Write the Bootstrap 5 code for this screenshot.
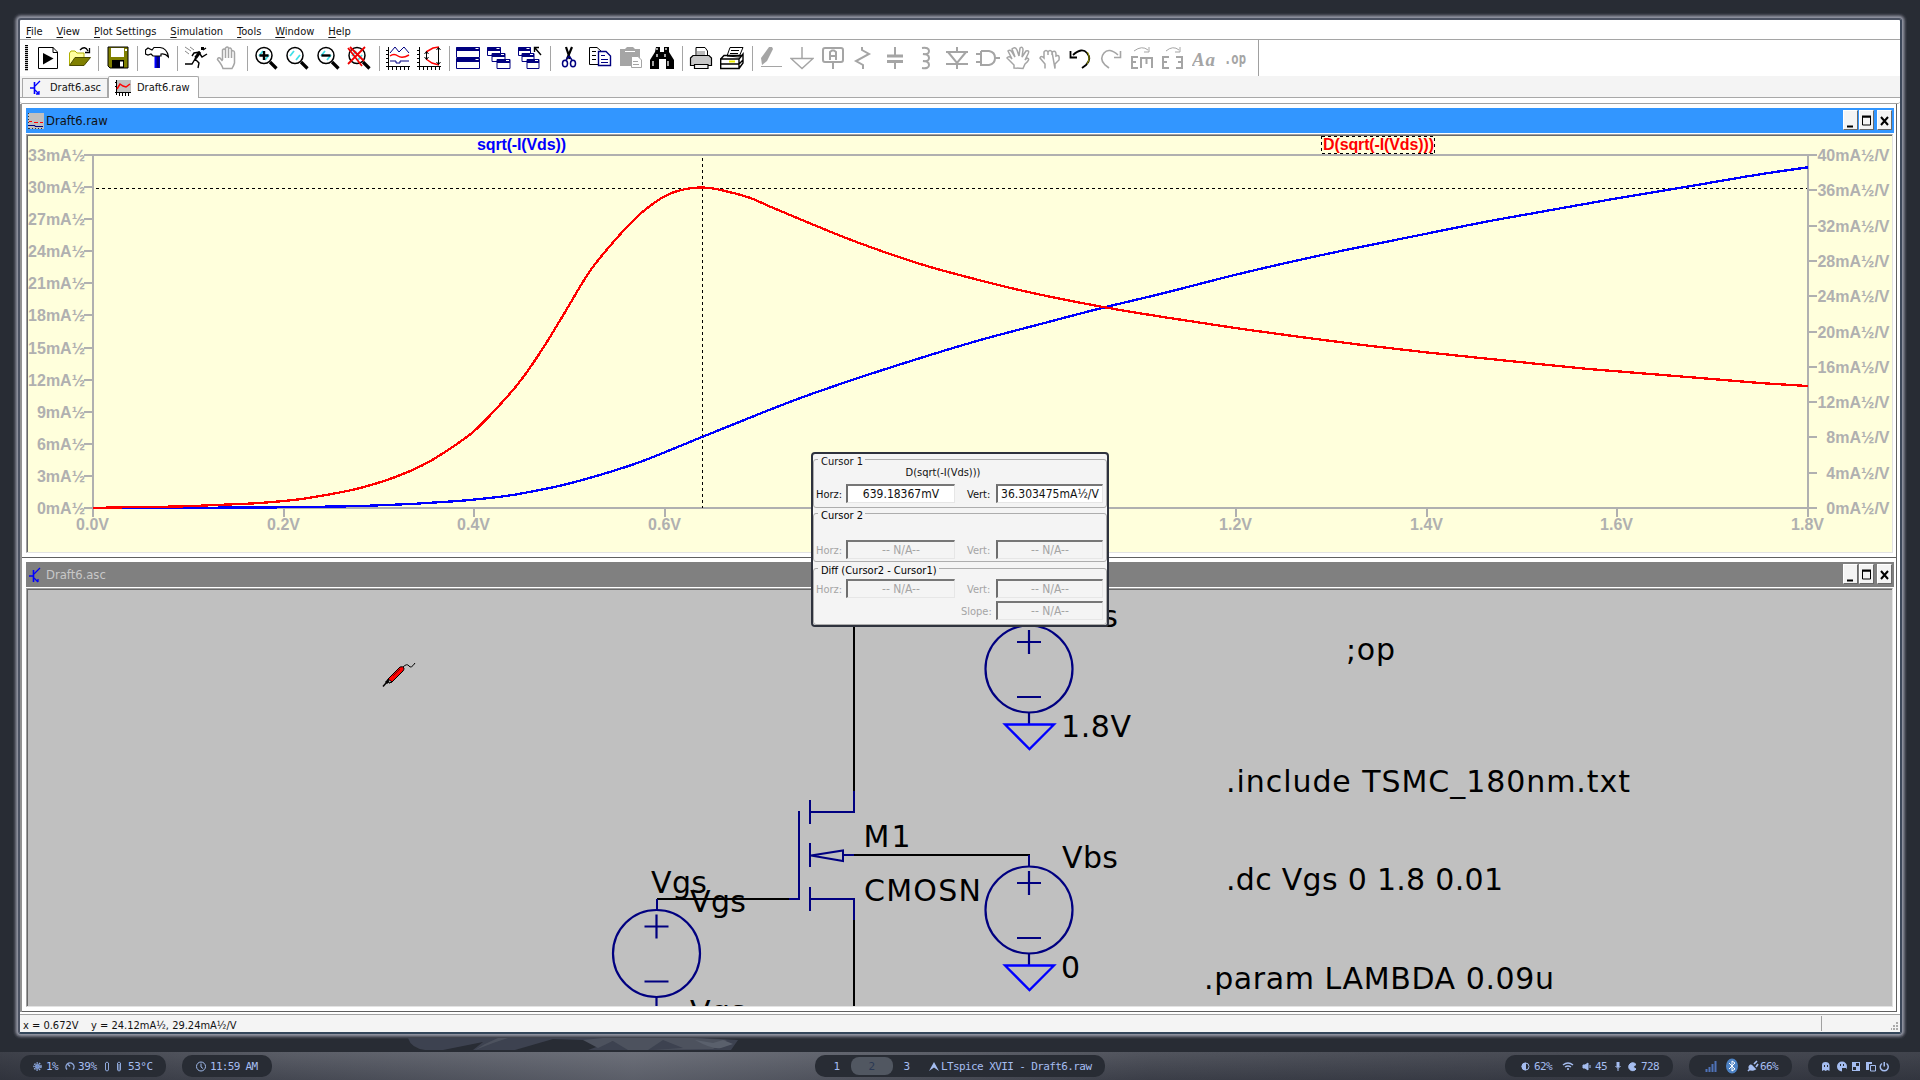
<!DOCTYPE html>
<html lang="en">
<head>
<meta charset="utf-8">
<title>LTspice XVII - Draft6.raw</title>
<link href="https://cdn.jsdelivr.net/npm/bootstrap@5.3.0/dist/css/bootstrap.min.css" rel="stylesheet">
<script src="https://cdn.jsdelivr.net/npm/bootstrap@5.3.0/dist/js/bootstrap.bundle.min.js"></script>
<style>
body{width:1920px;height:1080px;overflow:hidden;background:#282c34;color:#111;font:11px/1.2 "DejaVu Sans Condensed","DejaVu Sans",sans-serif;font-stretch:condensed}
svg{display:block;flex:none}
.desk{height:1052px;padding:18px 0 0 18px}
.appwin{width:1884px;height:1016px;background:#fff;border:2px solid #4d5464;border-bottom-color:#33465a;border-right-color:#3d485a;border-radius:3px;box-shadow:0 0 0 1px #8b8e9b,0 0 0 2px #777a86,0 0 0 3px #5c5f6a,0 0 0 4px #41444e,0 0 0 5px #30343d}
.menu{height:20px;border-bottom:1px solid #a5a5a5;padding:5px 0 0 6px;gap:14px}
.menu u{text-underline-offset:2px}
.tools{height:36px;width:1239px;border-right:1px solid #a0a0a0}
.grip{width:3px;height:26px;margin-left:5px;margin-right:4.5px;background:repeating-linear-gradient(#000 0 1px,#bbb 1px 2px)}
.slot{width:30.9px}
.bar{width:8.3px;height:25px;background:linear-gradient(#a5a5a5,#a5a5a5) 4px 0/1px 100% no-repeat}
.tabrow{height:22px;background:#f4f4f4;border-bottom:1px solid #a8a8a8;padding-left:2px}
.tb{border:1px solid #a8a8a8;border-bottom:0;height:19px;background:#f4f4f4;gap:7px;padding-left:6px}
.tb.on{height:22px;background:#fff;border-radius:2px 2px 0 0;margin-bottom:-1px}
.strip{height:6px;border-bottom:1px solid #a0a0a0;border-radius:0 0 3px 3px}
.mdi{border-left:2px solid #929292;height:908px}
.child{width:1875px;height:454px;padding:4px 2px 4px 4px;border-right:1px solid #606060;border-bottom:1px solid #606060}
.tbar{height:25px;background:#3296ff;font-size:12.9px;color:#111;padding-left:2px;padding-right:2px}
.tbar.off{background:#808080;color:#c8c8c8}
.tname{margin-left:2px}
.wb{width:15px;height:20px;background:#f4f4f4;border:1px solid #fff;border-right-color:#696969;border-bottom-color:#696969;margin-top:-1px}
.well{margin-top:1px;width:1867px;border-top:1px solid #a0a0a0;border-left:1px solid #a0a0a0;border-right:1px solid #e3e3e3;border-bottom:1px solid #e3e3e3}
.well>svg{border-top:1px solid #696969;border-left:1px solid #696969;box-sizing:content-box}
.stat{margin-top:2px;height:18px;border-top:1px solid #a0a0a0;background:#f4f4f4;white-space:pre;padding:4px 0 0 3px}
.stat .mk{width:1px;height:15px;background:#a0a0a0;margin-right:75px;margin-top:-3px}
.ax{font:bold 16px "Liberation Sans",sans-serif;fill:#b0b0b0}
.sch{font:30px "DejaVu Sans",sans-serif;fill:#000}
.dlg{position:absolute;left:811px;top:452px;width:298px;height:175px;background:#f4f4f4;border:2px solid #2e323d;border-radius:4px}
.grp{position:relative;border:1px solid #adadad;border-radius:3px}
.grp>b{position:absolute;left:4px;top:-5px;background:#f4f4f4;font-weight:400;padding:0 2px 0 3px;line-height:13px;white-space:nowrap}
.rw{display:flex;align-items:flex-start}
.rw label{line-height:22px;padding-left:2px}
.fld{height:19px;border:2px solid #6e6e6e;border-top-color:#777;border-right:1px solid #e6e6e6;border-bottom:1px solid #e6e6e6;background:#fff;font-size:12px;line-height:17px;text-align:center;white-space:nowrap}
.na{color:#a5a5a5}.na .fld{background:transparent}
.dock{height:28px;background:linear-gradient(90deg,rgba(38,41,50,.5),rgba(140,144,155,.12) 15%,rgba(160,164,175,.32) 33%,rgba(60,63,72,.1) 60%,rgba(38,41,50,.4)),linear-gradient(#545760,#3a3d47)}
.pill{height:22px;margin-top:3px;background:#282c34;border-radius:10px;white-space:pre}
.pill text{font:11px "DejaVu Sans Mono",monospace;fill:#a5bdf0}
</style>
</head>
<body>
<div class="desk">
<div class="appwin">
 <div class="menu d-flex"><span><u>F</u>ile</span><span><u>V</u>iew</span><span><u>P</u>lot Settings</span><span><u>S</u>imulation</span><span><u>T</u>ools</span><span><u>W</u>indow</span><span><u>H</u>elp</span></div>
 <div class="tools d-flex align-items-center" id="tools"><div class="grip"></div></div>
 <div class="tabrow d-flex align-items-end">
  <div class="tb d-flex align-items-center" style="width:86px"><svg width="14" height="16" fill="none" stroke="#00f" stroke-width="1.300"><path d="M1 8H5M5.500 2V14" stroke-width="1.600"/><path d="M6 6L11 1M6 10L10 14M10 11V14H7"/></svg><span>Draft6.asc</span></div>
  <div class="tb on d-flex align-items-center" style="width:91px;gap:6px"><svg width="16" height="17"><path fill="#c0c0c0" d="M1 1H16V14H1z"/><path d="M1.500 1V16M0 13.500H16M4.500 13V17M7.500 13V17M10.500 13V17M13.500 13V17M0 3.500H2M0 7.500H2" stroke="#000"/><path d="M2 10L5 5 8 7 11 8 15 5" fill="none" stroke="red" stroke-width="1.500"/></svg><span>Draft6.raw</span></div>
 </div>
 <div class="strip"></div>
 <div class="mdi">
  <section class="child">
   <div class="tbar d-flex align-items-center"><svg width="16" height="16"><path fill="#c0c0c0" d="M0 0H16V16H0z"/><path d="M.5 0V16M1 15.500H16" stroke="#333" stroke-dasharray="1 2"/><path d="M1 8.500H4M6 9.500H10M12 9.500H15" stroke="red"/><path d="M0 12.500H7V13.500H15" fill="none" stroke="#000080"/></svg><span class="tname me-auto">Draft6.raw</span>
    <span class="d-flex"><svg class="wb"><path d="M3 15.500H9" stroke="#000" stroke-width="2"/></svg><svg class="wb" style="margin-left:1px"><path d="M2.500 6H10.500V14H2.500z" fill="none" stroke="#000"/><path d="M2 5.500H11" stroke="#000" stroke-width="2"/></svg><svg class="wb" style="margin-left:3px"><path d="M3 6L10 14M10 6L3 14" stroke="#000" stroke-width="2"/></svg></span></div>
   <div class="well"><svg width="1864" height="416" viewBox="28 136 1864 416"><rect x="28" y="136" width="1864" height="416" fill="#ffffdc"/>
    <g id="axes" class="ax"></g>
    <g shape-rendering="crispEdges" fill="none">
     <path d="M84 155H1817M93 154V517M84 508H1817M1808 154V517" stroke="#b0b0b0" stroke-width="2"/>
     <path d="M96 188.500H1807M702.500 158V508" stroke="#000" stroke-dasharray="3 3"/>
     <path id="idTrace" stroke="#00f" stroke-width="2.300"/>
     <path id="gmTrace" stroke="red" stroke-width="2.300"/>
     <rect x="1321.500" y="136.500" width="113" height="17" stroke="#000" stroke-dasharray="3 3"/>
    </g>
    <text class="ax" x="477" y="150" textLength="89" style="fill:#00f">sqrt(-I(Vds))</text>
    <text class="ax" x="1323" y="150" textLength="111" style="fill:red">D(sqrt(-I(Vds)))</text>
   </svg></div>
  </section>
  <section class="child">
   <div class="tbar off d-flex align-items-center"><svg width="16" height="16" fill="none" stroke="#00f" stroke-width="1.300"><path d="M1 9H5M5.500 3V15" stroke-width="1.600"/><path d="M6 7L12 1M6 11L10 15M10 12V15"/></svg><span class="tname me-auto">Draft6.asc</span>
    <span class="d-flex"><svg class="wb"><path d="M3 15.500H9" stroke="#000" stroke-width="2"/></svg><svg class="wb" style="margin-left:1px"><path d="M2.500 6H10.500V14H2.500z" fill="none" stroke="#000"/><path d="M2 5.500H11" stroke="#000" stroke-width="2"/></svg><svg class="wb" style="margin-left:3px"><path d="M3 6L10 14M10 6L3 14" stroke="#000" stroke-width="2"/></svg></span></div>
   <div class="well"><svg width="1864" height="416" viewBox="28 590 1864 416"><rect x="28" y="590" width="1864" height="416" fill="#c0c0c0"/>
    <defs><g id="vsrc" fill="none" stroke="#000080" stroke-width="2.200"><circle r="43.500"/><path d="M-12-27H12M0-39V-15M-12 28H12M0 43V55"/></g></defs>
    <g fill="none" stroke-width="2" shape-rendering="crispEdges">
     <path d="M854 590V792M854 855H1029V856M789 899H657M854 920V1006" stroke="#000"/>
     <path d="M854 791V812H810M810 800V824M799 811V900M810 843V867M843 855H854M810 887V911M810 899H854V920M789 899H799M1029 855V867M657 899V911" stroke="#000080"/></g>
    <path d="M811 855.500L843 850.500V861z" fill="none" stroke="#000080" stroke-width="2"/>
    <use href="#vsrc" x="1029" y="910"/><use href="#vsrc" x="1029" y="669"/><use href="#vsrc" x="656.500" y="953.500"/>
    <path d="M1005 965.500H1054L1029.500 990zM1005 724.500H1054L1029.500 749z" fill="none" stroke="#00f" stroke-width="2.300"/>
    <g class="sch">
     <text x="1062" y="627" textLength="56">Vds</text><text x="1061" y="737" textLength="70">1.8V</text><text x="863.500" y="847" textLength="47">M1</text><text x="864" y="901" textLength="117">CMOSN</text><text x="1062" y="868" textLength="56">Vbs</text><text x="1061" y="978">0</text><text x="651" y="893" textLength="56">Vgs</text><text x="690" y="912" textLength="56">Vgs</text><text x="690" y="1022" textLength="56">Vgs</text>
     <text x="1346" y="660" textLength="49">;op</text><text x="1226" y="792" textLength="404">.include TSMC_180nm.txt</text><text x="1226" y="890" textLength="277">.dc Vgs 0 1.8 0.01</text><text x="1204" y="989" textLength="350">.param LAMBDA 0.09u</text></g>
    <g transform="translate(383,663)" fill="none" stroke="#000"><path d="M0 23.500L4 19" stroke-width="1.500"/><path d="M3 20L8 15" stroke-width="3"/><path d="M5 16L17 4Q20 3 21 5 21 7 20 8L9 19 6 20z" fill="red"/><path d="M5 16L9 19 6 20z" fill="#ccc"/><path d="M10 13L17 6" stroke="#700"/><path d="M20 4Q24 0 26 3T32 0"/></g>
   </svg></div>
  </section>
 </div>
 <div class="stat d-flex justify-content-between"><span>x = 0.672V    y = 24.12mA½, 29.24mA½/V</span><span class="d-flex"><i class="mk"></i><svg width="8" height="14" style="margin-left:-6px;margin-right:1px;margin-top:-2px"><path fill="#aaa" d="M5 5h2v2h-2zM2 8h2v2h-2zM5 8h2v2h-2zM-1 11h2v2h-2zM2 11h2v2h-2zM5 11h2v2h-2z"/></svg></span></div>
</div>
<svg width="360" height="14" style="margin:2px 0 0 385px"><path d="M5 2H300L335 4 328 14H185L210 5 150 3 112 14H70L80 6 40 14H22Q8 12 5 2z" fill="#3d4250"/><path d="M95 2L82 8 72 14 90 7 105 2zM180 4L195 12 210 5 225 14H245L260 4 280 12 250 14 310 13 324 4 290 2H200z" fill="#4d525e"/><path d="M292 4Q310 14 318 12L330 8 320 4 310 7z" fill="#5a606c"/></svg>
</div>

<div class="dlg">
 <div class="grp" style="margin:5px 0 0;height:49px"><b>Cursor 1</b>
  <div style="padding:7px 0 0 0;width:258px;text-align:center;line-height:12px">D(sqrt(-I(Vds)))</div>
  <div class="rw" style="padding:5px 0 0 0"><label style="width:32px">Horz:</label><div class="fld" style="width:109px">639.18367mV</div><label style="width:41px;padding-left:12px">Vert:</label><div class="fld" style="width:107px">36.303475mA½/V</div></div></div>
 <div class="grp na" style="margin:5px 0 0;height:49px"><b class="text-black">Cursor 2</b>
  <div class="rw" style="padding:26px 0 0 0"><label style="width:32px">Horz:</label><div class="fld" style="width:109px">-- N/A--</div><label style="width:41px;padding-left:12px">Vert:</label><div class="fld" style="width:107px">-- N/A--</div></div></div>
 <div class="grp na" style="margin:6px 0 0;height:57px"><b class="text-black">Diff (Cursor2 - Cursor1)</b>
  <div class="rw" style="padding:10px 0 0 0"><label style="width:32px">Horz:</label><div class="fld" style="width:109px">-- N/A--</div><label style="width:41px;padding-left:12px">Vert:</label><div class="fld" style="width:107px">-- N/A--</div></div>
  <div class="rw" style="padding:0 0 0 141px"><label style="width:41px;padding-left:6px">Slope:</label><div class="fld" style="width:107px">-- N/A--</div></div></div>
</div>

<footer class="dock d-flex">
 <div class="pill" style="width:146px;margin-left:20px"><svg width="146" height="22" fill="none" stroke="#8fa9dc"><circle cx="17.500" cy="11.500" r="3.500" stroke-dasharray="1.500 1" stroke-width="1.500"/><circle cx="17.500" cy="11.500" r="2" fill="#6f8fd0"/><path d="M47 14.500A4 4 0 1 1 53 14.500M50 11.500L48 9.500" stroke-width="1.400"/><path d="M85.500 8Q87 6 88.500 8V13Q89 16 87 16T85.500 13zM97.500 8Q99 6 100.500 8V13Q101 16 99 16T97.500 13zM99 9V15"/><g stroke="none"><text x="26" y="15" textLength="12.500">1%</text><text x="58" y="15" textLength="19">39%</text><text x="108" y="15" textLength="25">53°C</text></g></svg></div>
 <div class="pill" style="width:90px;margin-left:16px"><svg width="90" height="22" fill="none" stroke="#9fb9ea"><circle cx="19" cy="11.500" r="4.500"/><path d="M19 8.500V12L21 13.500"/><text stroke="none" x="28" y="15" textLength="48">11:59 AM</text></svg></div>
 <div class="pill" style="width:290px;margin-left:543px"><svg width="290" height="22"><rect x="36" y="2" width="42" height="18" rx="8" fill="#515761"/><text x="18.500" y="15">1</text><text x="53.500" y="15" style="fill:#2b3954">2</text><text x="88.500" y="15">3</text><path d="M114 16L119 7 124 16 119 12.500z" fill="#a5bdf0"/><text x="126" y="15" textLength="151">LTspice XVII - Draft6.raw</text></svg></div>
 <div class="pill" style="width:168px;margin-left:400px"><svg width="168" height="22" fill="none" stroke="#a5bdf0"><circle cx="20.500" cy="11.500" r="3.500"/><path d="M20.500 8A3.500 3.500 0 0 0 20.500 15z" fill="#a5bdf0"/><path d="M58 10Q63 6 68 10M60 12Q63 10 66 12M62 14H64" stroke-width="1.500"/><path d="M78 10H80L83 8V15L80 13H78z" fill="#a5bdf0"/><path d="M85 10V13"/><path d="M113 7V12" stroke-width="3"/><path d="M110.500 11Q113 15 115.500 11M113 13V16"/><path d="M131 9.500A4 4 0 1 0 131 14L128 12z" fill="#a5bdf0"/><g stroke="none"><text x="29" y="15" textLength="18.500">62%</text><text x="90" y="15" textLength="12.500">45</text><text x="136" y="15" textLength="18.500">728</text></g></svg></div>
 <div class="pill" style="width:103px;margin-left:16px"><svg width="103" height="22"><path d="M17.500 17V14M20.500 17V12M23.500 17V9M26.500 17V6" stroke="#4f72b8" stroke-width="2"/><ellipse cx="43" cy="11" rx="6" ry="7.500" fill="#4d82c4"/><path d="M40 8L46 14 43 16V6L46 8 40 14" fill="none" stroke="#fff"/><path d="M59 16L63 12M62 10L66 14Q63 16 61 14T62 10M65 9L68 6M67 12L69 9" stroke="#a5bdf0" stroke-width="1.700" fill="#a5bdf0"/><text x="71" y="15" textLength="18.500">66%</text></svg></div>
 <div class="pill" style="width:92px;margin-left:16px"><svg width="92" height="22" fill="#a5bdf0"><path d="M14 16V10Q14 7 17.500 7T21.500 10V16L19.500 15 17.500 16 16 15z"/><circle cx="34" cy="11.500" r="5"/><path d="M34 13H38V17H34z" fill="#282c34"/><path d="M44 7H52V16H44z"/><path d="M48 8H51V11H48zM45 12H48V15H45zM16 10h1v2h-1zM19 10h1v2h-1zM32 9h1v2h-1zM35 9h1v2h-1z" fill="#282c34"/><path d="M58 7H64V9H61V15H58z"/><path d="M62.500 10.500H67.500V16H62.500z" fill="none" stroke="#a5bdf0"/><path d="M74 8.500A4 4 0 1 0 78.500 8.500M76.250 7V11.500" fill="none" stroke="#a5bdf0" stroke-width="1.500"/></svg></div>
</footer>

<script>
const G='stroke="#a5a5a5" fill="none" stroke-width="2"';
const lens='<path d="M16 16L22.500 22.500" stroke="#000" stroke-width="3.200"/><circle cx="10" cy="9.500" r="8" fill="#fff" stroke="#000" stroke-width="1.500"/>';
const shine='<path d="M5 10L9 5M11 14L15 9" stroke="#3fe0e8" stroke-width="1.800"/>';
const win=(x,y,w,h)=>`<path d="M${x} ${y}h${w}v${h}h-${w}z" fill="#fff" stroke="#000080"/><path d="M${x} ${y+1.5}h${w}" stroke="#000080" stroke-width="4"/><path d="M${x+w-4} ${y+1}h3" stroke="#fff"/>`;
const axis='<path d="M2.500 1V24M0 20.500H24M0 4.500H3M0 8.500H3M0 12.500H3M0 16.500H3M6.500 20V24M10.500 20V24M14.500 20V24M18.500 20V24M22.500 20V24" stroke="#000"/>';
const icons=[
'<path d="M2.500 1.500H17L21.500 6V22.500H2.500z" fill="#fff" stroke="#000"/><path d="M17 1V6.500H22" fill="none" stroke="#000"/><path d="M7 7L17.500 12.500 7 18.500z"/>',
'<path d="M2.500 19V7L4 5H8L10 7H17V12" fill="#ffffa0" stroke="#b0b000"/><path d="M2.500 19.500L8 11.500H23.500L17 19.500z" fill="#808000" stroke="#4a4a00"/><path d="M13 4Q18-1 21 5M22.500 2V6.500H18" fill="none" stroke="#000" stroke-width="1.300"/>','|',
'<path d="M2 1H22V22H4L2 20z" fill="#808000" stroke="#000"/><path d="M5 2H18V11H5zM19 3h2v2h-2z" fill="#fff"/><path d="M6 14H18V22H6z"/><path d="M14 15.500h3v5h-3z" fill="#fff"/>','|',
'<path d="M9.500 9H15V22H9.500z" fill="#00f"/><path d="M13 9V22" stroke="#008" stroke-width="3"/><path d="M.5 4L3 2 7 4 9 1.500H15Q22 2 23.500 11 20 7 16 8V10H8L6 8 3 9 .5 8z" fill="#fff" stroke="#000" stroke-width="1.200"/>','|',
'<path d="M17 1h3v3h-3z"/><path d="M16 6L11 13 15 17 14 22M11 13L8 18H1M16 6L10 7 8 10M16 8L18 11 23 8M19 4L22 2" fill="none" stroke="#000" stroke-width="1.400"/><path d="M16 6L11.500 12" stroke="#000" stroke-width="3"/><path d="M1 1L7 5M6 1L10 4M1 5L5 8" stroke="#888"/>',
`<path d="M7.500 14V4Q9 2 10.500 4V12M10.500 12V2Q12.500 0 13.500 2V12M13.500 12V2.500Q15.500 1 16.500 3.500V12M16.500 12V5Q19.500 4 19.500 7V17Q19 19 17 22.500H8Q7 19 2.500 13.500 3 11 5 12L7.500 15" stroke="#a5a5a5" fill="none" stroke-width="1.500"/>`,'|',
lens+shine+'<path d="M10 5V14M5.500 9.500H14.500" stroke="#000" stroke-width="2.400"/>',lens+shine,lens+shine+'<path d="M5.500 9.500H14.500" stroke="#000" stroke-width="2.400"/>',lens+shine+'<path d="M1 2L15 20M18 1L1 18M3 1L17 15" stroke="#e00" stroke-width="1.800"/>','|',
axis+'<path d="M4 7L9 1 13 6 18 1 23 7M4 15H10V17H14V15H23" fill="none" stroke="#000080"/><path d="M4 10Q8 7 12 10T23 9" fill="none" stroke="red" stroke-width="1.500"/>',
axis+'<path d="M22 1L16 2 9 6M9 13L15 17 22 19" fill="none" stroke="red" stroke-width="1.500"/><path d="M9.500 6V13M7.500 8L9.500 5.500 11.500 8M7.500 11L9.500 13.500 11.500 11M21.500 2V18M19.500 4L21.500 1.500 23.500 4M19.500 16L21.500 18.500 23.500 16" fill="none" stroke="#000"/>','|',
win(.5,1.500,23,10)+win(.5,12.500,23,10),win(.5,1.500,13,8)+win(5,7.500,13,8)+win(10,13.500,13,9),win(.5,1.500,12,8)+win(4,7.500,12,8)+win(9,13.500,12,9)+'<path d="M23 9L17 2M16.500 6V1.500H21" fill="none" stroke="#000" stroke-width="1.400"/>','|',
'<path d="M9 1L13 13M15 1L10 13" stroke="#000" stroke-width="2.200"/><path d="M12 10L9 14M12 10L15 14" stroke="#000080" stroke-width="1.500"/><ellipse cx="8" cy="17.500" rx="2.500" ry="3.300" fill="none" stroke="#000080" stroke-width="1.500"/><ellipse cx="16" cy="17.500" rx="2.500" ry="3.300" fill="none" stroke="#000080" stroke-width="1.500"/>',
'<path d="M1.500 1.500H9L13 5V18.500H1.500z" fill="#fff" stroke="#000"/><path d="M4 5.500H8M4 9.500H8M4 13.500H8" stroke="#000"/><path d="M10.500 5.500H18L22.500 10V19.500H10.500z" fill="#fff" stroke="#000080" stroke-width="1.400"/><path d="M13 9.500H17M13 13.500H20M13 16.500H20" stroke="#000080"/>',
'<path d="M1 3H6L8 1H14L16 3H21V20H1z" fill="#a5a5a5"/><path d="M6 5.500H16" stroke="#fff"/><path d="M12.500 10.500H19L22.500 14V21.500H12.500z" fill="#fff" stroke="#a5a5a5"/><path d="M14 15.500H19M14 18.500H20" stroke="#a5a5a5"/>',
'<path d="M6 1H10V6H14V1H19V6L24 14V23H16V13H9V23H0V14L5 6z"/><path d="M7 2v2M16 2v2M3 15v5M18 15v5M7 8v3M15 8v3M11 14h2" stroke="#fff" stroke-width="1.300"/>','|',
'<path d="M7 10V1.500H16L18.500 5V10" fill="#fff" stroke="#000"/><path d="M8 5h8v5h-8z" fill="#bbb"/><path d="M1.500 12L4 9.500H20L22.500 12V19.500H1.500z" fill="#c8c8c8" stroke="#000" stroke-width="1.200"/><path d="M5.500 18.500H19V22.500H5.500z" fill="#eee" stroke="#000" stroke-width="1.200"/>',
'<path d="M7 10L10 1.500H23L19 11z" fill="#fff" stroke="#000"/><path d="M11 4.500H19M10 7.500H18" stroke="#000"/><path d="M.7 13L4 9.500H22L19 13M.7 13H19V22.500H.7zM19 13L23 8V17L19 22.500M1 18H19L23 14" fill="none" stroke="#000" stroke-width="1.400"/><path d="M9 15.500H15" stroke="#ee0" stroke-width="2"/>','|',
'<path d="M10 1H13L14 3 8 15 3 19 2 12z" fill="#a5a5a5"/><path d="M2 20.500H23" stroke="#a5a5a5"/>',
`<path d="M12 1V12M1 12.500H23L12 22.500z" stroke="#a5a5a5" fill="none" stroke-width="1.500"/>`,
`<rect x="2" y="2" width="20" height="14" rx="2" ${G}/><path d="M12 16V23M9 14V6L11 4.500H13L15 6V14M9 10H15" ${G}/>`,
`<path d="M10 1V4L17 8 4 15 11 19V23" ${G}/>`,
`<path d="M4 10H20M4 15.500H20" stroke="#a5a5a5" stroke-width="3"/><path d="M12 1V9M12 16V23" ${G}/>`,
`<path d="M8 2Q15 1 15 5T9 8Q15 8 15 12T9 15Q15 15 15 19T8 22" ${G}/>`,
`<path d="M12 1V5M1 6H23M3 6L12 17 21 6M1 18H23M12 18V23" ${G}/>`,
`<path d="M5 5H13Q19 6 19 12T13 19H5V5M0 8H5M0 16H5M19 12H24" ${G}/>`,
`<path d="M8 22V19L1 12Q3 9 6 13L2 5Q4 3 6 6L9 11 6 3Q9 0 11 4L13 10 14 2Q17 0 17 4L16 11 20 5Q24 4 22 8L19 14 21 12Q25 13 19 18L17 22.500z" stroke="#a5a5a5" fill="none" stroke-width="1.500"/>`,
`<path d="M8 22.500V18L3 12Q4 9 7 12V6Q9 3 11 6V9M11 6Q13 3 15 6V9M15 6Q19 4 19 8V10Q23 8 22 14L18 18V22.500z" stroke="#a5a5a5" fill="none" stroke-width="1.500"/>`,
'<path d="M5 9Q14 1 19 7T18 19L14 22M2.500 5V11.500H9" fill="none" stroke="#000" stroke-width="1.800"/><path d="M19.500 6Q23 12 19 18" fill="none" stroke="#990"/>',
`<path d="M19 9Q10 1 5 7T6 19L10 22M21.500 5V11.500H15" stroke="#a5a5a5" fill="none" stroke-width="1.600"/>`,
`<path d="M4 5Q12-1 18 4M19 1V6H14" stroke="#a5a5a5" fill="none"/><path d="M8 11H2V22H8M2 16H6M11 22V12H22V22M16.500 12V18" ${G}/>`,
`<path d="M5 5Q12-1 18 4M19 1V6H14" stroke="#a5a5a5" fill="none"/><path d="M8 11H2V22H8M2 16H6M15 11H21V22H15M21 16H17" ${G}/>`,
'<text x="0" y="20" textLength="23" style="font:italic bold 19px Liberation Serif,serif" fill="#a5a5a5">Aa</text>',
'<text x="1" y="18" textLength="22" lengthAdjust="spacingAndGlyphs" style="font:bold 15px DejaVu Sans Mono,monospace" fill="#a5a5a5">.op</text>'];
tools.insertAdjacentHTML('beforeend',icons.map(i=>i==='|'?'<div class="bar"></div>':`<div class="slot d-flex justify-content-center"><svg width="24" height="24">${i}</svg></div>`).join(''));

// Catmull-Rom spline through the sampled trace points
function smooth(s){
  const p=s.split(' ').map(q=>q.split(',').map(Number));
  let d=`M${p[0]}`;
  for(let i=0;i<p.length-1;i++){
    const a=p[i-1]||p[i],b=p[i],c=p[i+1],e=p[i+2]||c,h=(c[0]-b[0])/3;
    const m1=(c[1]-a[1])/(c[0]-a[0]),m2=(e[1]-b[1])/(e[0]-b[0]);
    d+=`C${b[0]+h},${b[1]+m1*h} ${c[0]-h},${c[1]-m2*h} ${c}`;
  }
  return d;
}
idTrace.setAttribute('d',smooth('93,508 267,507.5 350,506.3 387,505 416,503.7 455,501.2 475,499.5 506,496 524,493 561,485.5 598,475.5 640,462 702,437 735,423.7 796,399.6 857,378.4 918,358.8 979,340.4 1041,323.9 1102,308 1163,293.3 1240,273.7 1322,255 1426,233.8 1483,222.3 1539,212.2 1617,198.3 1695,185.3 1760,174.3 1808,167.3'));
gmTrace.setAttribute('d',smooth('93,508 112,507.5 178,506.5 216,505 255,503.3 284,501 305,498.5 337,493 361,487.8 394,477.5 422,465.5 445,452 475,430.3 506,398 524.5,375.5 545,345 563,315.5 590,271 618,236.7 640,214 661,198.4 673.5,192.3 688,188.6 702,187.5 716,189 749,197.5 771,207 814,225 857,242.2 918,263.3 967,277 1028,292 1102,306.8 1163,317 1240,328.7 1305,337.6 1361,344.8 1426,352.3 1500,360 1578,368 1617,371.3 1700,378 1760,383 1808,386'));

let a='',t='';
for(let i=0;i<12;i++){const y=Math.round(508-i*353/11);t+=`M84 ${y}H93`;a+=`<text x="85" y="${y+6}" text-anchor="end">${i*3}mA½</text>`}
for(let i=0;i<11;i++){const y=Math.round(508-i*35.3);t+=`M1808 ${y}H1817`;a+=`<text x="1889.5" y="${y+6}" text-anchor="end">${i*4}mA½/V</text>`}
for(let i=0;i<10;i++){const x=Math.round(93+i*190.55);t+=`M${x} 508V517`;a+=`<text x="${x-.5}" y="530" text-anchor="middle">${(i*.2).toFixed(1)}V</text>`}
axes.innerHTML=`<path d="${t}" stroke="#b0b0b0" stroke-width="2" shape-rendering="crispEdges"/>`+a;
</script>
</body>
</html>
